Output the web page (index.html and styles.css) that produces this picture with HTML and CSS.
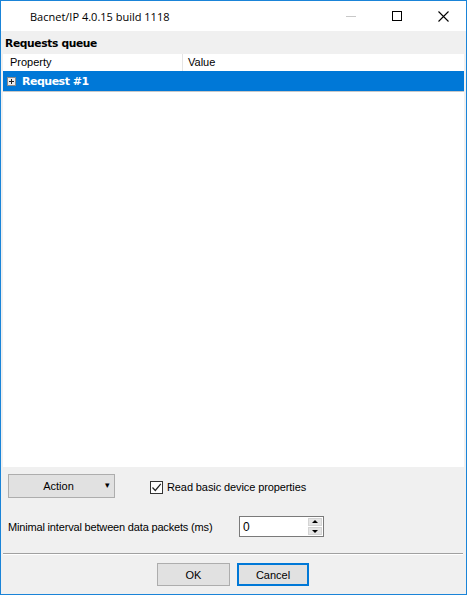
FILE: index.html
```html
<!DOCTYPE html>
<html lang="en">
<head>
  <meta charset="UTF-8" />
  <title>Bacnet/IP 4.0.15 build 1118</title>
  <link rel="stylesheet" href="styles.css">
</head>
<body>

  <div class="window">
    <div class="titlebar">
      <span class="title">Bacnet/IP 4.0.15 build 1118</span>
      <div class="caption-buttons">
        <span class="cap cap-min"><i></i></span>
        <span class="cap cap-max"><i></i></span>
        <span class="cap cap-close">
          <svg width="11" height="11" viewBox="0 0 11 11"><path d="M0.5 0.5 L10.5 10.5 M10.5 0.5 L0.5 10.5" stroke="#000" stroke-width="1.1" fill="none"/></svg>
        </span>
      </div>
    </div>

    <div class="main">
      <div class="group-label">Requests queue</div>

      <div class="grid">
        <div class="grid-head">
          <div class="col col-prop">Property</div>
          <div class="col col-val">Value</div>
        </div>
        <div class="grid-row selected">
          <span class="expander"></span>
          <span class="row-text">Request #1</span>
        </div>
      </div>

      <div class="bottom">
        <div class="line action-line">
          <button class="btn btn-action">Action <span class="drop">&#9662;</span></button>
          <label class="check">
            <span class="box">
              <svg width="11" height="11" viewBox="0 0 11 11"><path d="M1.5 5.5 L4.3 8.5 L9.8 1.8" stroke="#222" stroke-width="1.2" fill="none"/></svg>
            </span>
            Read basic device properties
          </label>
        </div>

        <div class="line interval-line">
          <span class="lbl">Minimal interval between data packets (ms)</span>
          <div class="spin">
            <span class="spin-value">0</span>
            <div class="spin-btns">
              <span class="spin-up"></span>
              <span class="spin-down"></span>
            </div>
          </div>
        </div>

        <div class="separator"></div>

        <div class="line dialog-buttons">
          <button class="btn btn-ok">OK</button>
          <button class="btn btn-cancel">Cancel</button>
        </div>
      </div>
    </div>
  </div>

</body>
</html>
```

FILE: styles.css
```css
html, body { margin:0; padding:0; }
body { width:467px; height:595px; font-family:"Liberation Sans", Arial, sans-serif; font-size:11px; color:#000; }

.window { box-sizing:border-box; width:467px; height:595px; border:1px solid #1a84d8; background:#f0f0f0; display:flex; flex-direction:column; }

.titlebar { height:30px; background:#fff; display:flex; align-items:center; flex-shrink:0; }
.title { margin-left:29px; font-family:"Open Sans", "Noto Sans", sans-serif; font-size:11px; color:#000; flex:1; }
.caption-buttons { display:flex; height:30px; }
.cap { width:46px; height:30px; display:flex; align-items:center; justify-content:center; }
.cap-min i { display:block; width:10px; height:1px; background:#c8c8c8; }
.cap-max i { display:block; width:8px; height:8px; border:1px solid #000; }
.cap-close svg { display:block; }

.main { flex:1; display:flex; flex-direction:column; padding:0 2px; }

.group-label { height:23px; box-sizing:border-box; padding:6px 0 0 2px; font-family:"DejaVu Sans", sans-serif; font-weight:bold; font-size:10.7px; line-height:14px; letter-spacing:-0.35px; }

.grid { flex:1; background:#fff; }
.grid-head { height:17px; display:flex; }
.col { box-sizing:border-box; line-height:17px; padding-left:7px; color:#000; }
.col-prop { width:180px; border-right:1px solid #e5e5e5; }
.col-val { flex:1; padding-left:5px; }

.grid-row { height:20px; display:flex; align-items:center; }
.grid-row.selected { background:#0078d7; border-bottom:1px solid #c8c8c8; }
.expander { width:7px; height:7px; margin:0 6px 0 4px; border:1px solid #8a8a8a; background:#ececec; position:relative; }
.expander::before { content:""; position:absolute; left:1px; top:3px; width:5px; height:1px; background:#222; }
.expander::after { content:""; position:absolute; left:3px; top:1px; width:1px; height:5px; background:#222; }
.row-text { font-family:"DejaVu Sans", sans-serif; font-weight:bold; font-size:11px; color:#fff; letter-spacing:-0.5px; }

.bottom { height:127px; display:flex; flex-direction:column; }
.line { display:flex; align-items:center; }

.btn { box-sizing:border-box; font-family:"Liberation Sans", Arial, sans-serif; font-size:11px; background:#e1e1e1; border:1px solid #adadad; color:#000; padding:0; margin:0; }

.action-line { margin-top:7px; height:24px; padding-left:5px; }
.btn-action { width:107px; height:24px; position:relative; text-align:center; padding-right:6px; }
.drop { position:absolute; right:4px; top:5px; font-size:9px; }

.check { display:flex; align-items:center; margin-left:35px; margin-top:2px; letter-spacing:-0.1px; }
.box { box-sizing:border-box; width:13px; height:13px; border:1px solid #333; background:#fff; margin-right:4px; display:flex; align-items:center; justify-content:center; }

.interval-line { margin-top:18px; height:21px; padding-left:5px; }
.lbl { width:231px; letter-spacing:-0.17px; }
.spin { box-sizing:border-box; width:85px; height:21px; border:1px solid #7a7a7a; background:#fff; display:flex; align-items:center; justify-content:space-between; }
.spin-value { padding-left:3px; font-size:12px; }
.spin-btns { display:flex; flex-direction:column; gap:1px; margin-right:1px; }
.spin-up, .spin-down { width:14px; height:8px; background:#e5e5e5; border:1px solid #d4d4d4; box-sizing:border-box; position:relative; }
.spin-up::after { content:""; position:absolute; left:3px; top:1px; border-left:3px solid transparent; border-right:3px solid transparent; border-bottom:3px solid #000; }
.spin-down::after { content:""; position:absolute; left:3px; top:2px; border-left:3px solid transparent; border-right:3px solid transparent; border-top:3px solid #000; }

.separator { margin-top:16px; height:1px; background:#a0a0a0; border-bottom:1px solid #fff; margin-right:1px; }

.dialog-buttons { margin-top:8px; padding-left:154px; }
.btn-ok { width:73px; height:23px; margin-right:7px; }
.btn-cancel { width:72px; height:23px; border:2px solid #0078d7; }
```
